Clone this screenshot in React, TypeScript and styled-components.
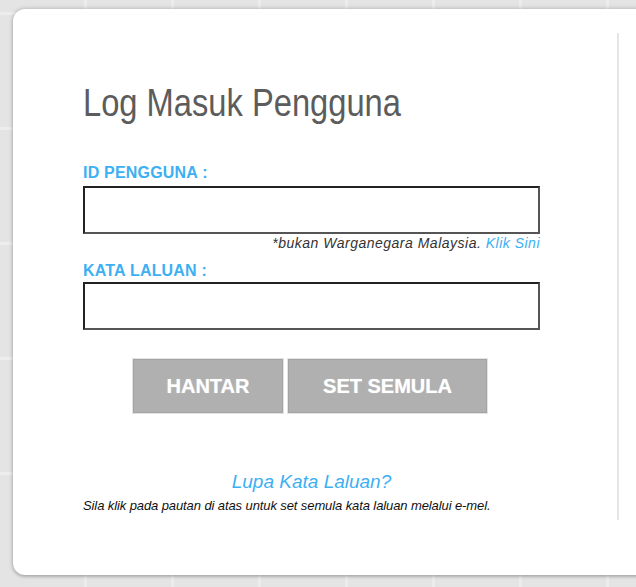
import React from "react";
import styled, { createGlobalStyle } from "styled-components";

const GlobalStyle = createGlobalStyle`
  html, body {
    margin: 0;
    padding: 0;
    overflow: hidden;
  }
  body {
    background-color: #e4e4e4;
    background-image:
      repeating-linear-gradient(0deg, transparent 0 112px, rgba(255,255,255,0.35) 112px 115px),
      repeating-linear-gradient(90deg, transparent 0 84px, rgba(255,255,255,0.3) 84px 87px);
    font-family: "Liberation Sans", Arial, sans-serif;
  }
`;

const Page = styled.div`
  padding: 9px 0 0 13px;
  height: 587px;
  box-sizing: border-box;
`;

const Panel = styled.div`
  width: 650px;
  height: 566px;
  background: #fff;
  border-radius: 12px;
  box-shadow: 0 0 4px rgba(0, 0, 0, 0.25), 0 2px 3px rgba(0, 0, 0, 0.15);
  display: flex;
  box-sizing: border-box;
  padding: 24px 0 0 70px;
`;

const Form = styled.div`
  width: 457px;
  display: flex;
  flex-direction: column;
`;

const Divider = styled.div`
  width: 2px;
  height: 487px;
  margin-left: 77px;
  background: #e6e6e6;
`;

const Title = styled.h1`
  margin: 50px 0 0 0;
  font-family: "Liberation Sans", Arial, sans-serif;
  font-weight: normal;
  font-size: 38px;
  line-height: 40px;
  color: #5c5c5c;
  transform: scaleX(0.86);
  transform-origin: left center;
  white-space: nowrap;
`;

const Label = styled.label<{ $top: number }>`
  display: block;
  margin-top: ${(p) => p.$top}px;
  font-family: "Liberation Sans", Arial, sans-serif;
  font-weight: bold;
  font-size: 16px;
  line-height: 18px;
  letter-spacing: 0.2px;
  color: #3cb0f2;
`;

const Input = styled.input<{ $top: number }>`
  display: block;
  width: 457px;
  height: 48px;
  margin-top: ${(p) => p.$top}px;
  box-sizing: border-box;
  border-style: solid;
  border-width: 2px;
  border-color: #222 #555 #555 #222;
  background: #fff;
  outline: none;
`;

const Hint = styled.div`
  margin-top: 2px;
  text-align: right;
  font-family: "Liberation Sans", Arial, sans-serif;
  font-style: italic;
  font-size: 14px;
  line-height: 15px;
  letter-spacing: 0.5px;
  color: #333;
`;

const Link = styled.a`
  color: #3cb0f2;
  text-decoration: none;
`;

const Buttons = styled.div`
  display: flex;
  gap: 5px;
  margin: 29px 0 0 50px;
`;

const Button = styled.button<{ $w: number }>`
  width: ${(p) => p.$w}px;
  height: 54px;
  background: #b0b0b0;
  border: 1px solid #a3a3a3;
  box-shadow: 0 0 0 1px #e4e4e4;
  color: #fff;
  font-family: "Liberation Sans", Arial, sans-serif;
  font-weight: bold;
  font-size: 20px;
  text-shadow: 0 0 1px rgba(255, 255, 255, 0.6);
  cursor: pointer;
  padding: 0;
`;

const Forgot = styled.div`
  margin-top: 58px;
  text-align: center;
  font-family: "Liberation Sans", Arial, sans-serif;
  font-style: italic;
  font-size: 19px;
  line-height: 22px;
`;

const Note = styled.p`
  margin: 5px 0 0 0;
  font-family: "Liberation Sans", Arial, sans-serif;
  font-style: italic;
  font-size: 13px;
  line-height: 15px;
  letter-spacing: -0.1px;
  color: #111;
  white-space: nowrap;
`;

export default function App() {
  return (
    <>
      <GlobalStyle />
      <Page>
        <Panel>
          <Form>
            <Title>Log Masuk Pengguna</Title>
            <Label $top={41}>ID PENGGUNA :</Label>
            <Input type="text" $top={4} />
            <Hint>
              *bukan Warganegara Malaysia. <Link href="#">Klik Sini</Link>
            </Hint>
            <Label $top={11}>KATA LALUAN :</Label>
            <Input type="password" $top={2} />
            <Buttons>
              <Button $w={150}>HANTAR</Button>
              <Button $w={199}>SET SEMULA</Button>
            </Buttons>
            <Forgot>
              <Link href="#">Lupa Kata Laluan?</Link>
            </Forgot>
            <Note>
              Sila klik pada pautan di atas untuk set semula kata laluan melalui e-mel.
            </Note>
          </Form>
          <Divider />
        </Panel>
      </Page>
    </>
  );
}
